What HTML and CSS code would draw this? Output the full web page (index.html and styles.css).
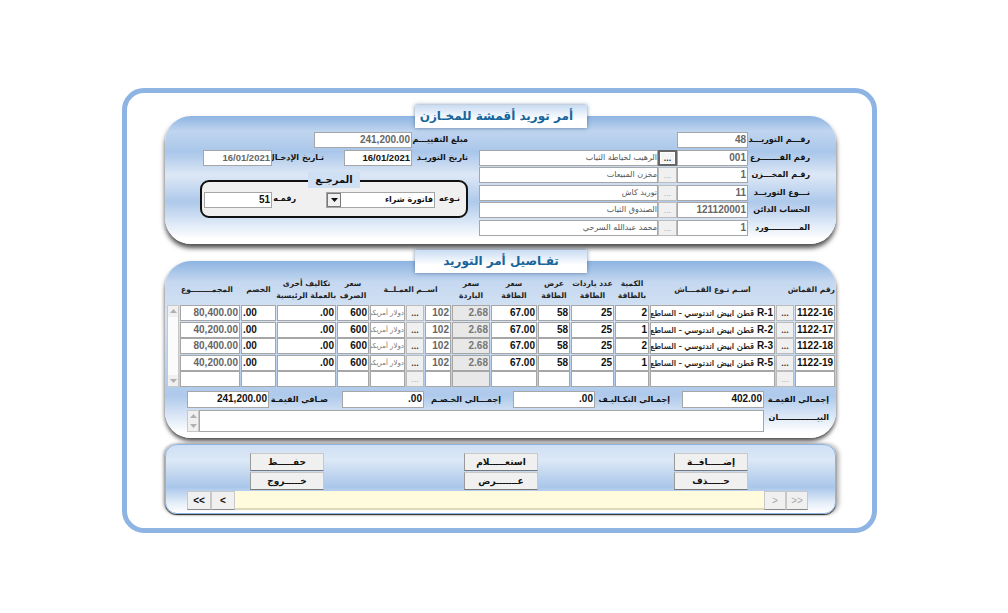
FILE: index.html
```html
<!DOCTYPE html>
<html lang="ar" dir="rtl">
<head>
<meta charset="utf-8">
<title>أمر توريد أقمشة للمخازن</title>
<link rel="stylesheet" href="styles.css">
</head>
<body>
<main class="frame">
  <section class="panel panel-head">
    <h1 class="title title-first">أمر توريد أقمشة للمخـازن</h1>
    <div class="head-right">
      <label class="lbl">رقـــم التوريـــد</label><div class="f num grey">48</div><span></span><span></span>
      <label class="lbl">رقم الفـــــــرع</label><div class="f num grey">001</div><button class="dots focus">...</button><div class="f txt">الرهيب لخياطة الثياب</div>
      <label class="lbl">رقـم المخـــزن</label><div class="f num grey">1</div><button class="dots off">...</button><div class="f txt">مخزن المبيعات</div>
      <label class="lbl">نـــوع التوريــد</label><div class="f num grey">11</div><button class="dots off">...</button><div class="f txt">توريد كاش</div>
      <label class="lbl">الحساب الدائن</label><div class="f num grey">121120001</div><button class="dots off">...</button><div class="f txt">الصندوق الثياب</div>
      <label class="lbl">المـــــــــــورد</label><div class="f num grey">1</div><button class="dots off">...</button><div class="f txt">محمد عبدالله السرحي</div>
    </div>
    <div class="head-left">
      <div class="line">
        <label class="lbl short">مبلغ التقييـــم</label><div class="f num grey w98">241,200.00</div>
      </div>
      <div class="line">
        <label class="lbl short">تاريخ التوريـد</label><div class="f num w68 strong date">16/01/2021</div>
        <label class="lbl mid">تـاريخ الإدخـال</label><div class="f num grey w69 date">16/01/2021</div>
      </div>
      <div class="ref">
        <div class="ref-title">المرجـع</div>
        <label class="lbl ref-type">نـوعه</label>
        <div class="combo"><div class="combo-text">فاتورة شراء</div><div class="combo-arrow"><svg width="7" height="4" viewBox="0 0 7 4"><path d="M0 0h7L3.500 4z" fill="#111"/></svg></div></div>
        <label class="lbl ref-no">رقمـه</label>
        <div class="f num strong w68">51</div>
      </div>
    </div>
  </section>

  <section class="panel panel-detail">
    <h2 class="title">تفـاصيل أمر التوريد</h2>
    <div class="table">
      <div class="th solo">رقم القماش</div><div class="th span2">اسـم نـوع القمـــاش</div><div class="th">الكمية<br>بالطاقة</div><div class="th">عدد ياردات<br>الطاقة</div><div class="th">عرض<br>الطاقة</div><div class="th">سعر<br>الطاقة</div><div class="th">سعر<br>الياردة</div><div class="th span3">اســم العمـلــة</div><div class="th">سعر<br>الصرف</div><div class="th">تكاليف أخرى<br>بالعملة الرئيسية</div><div class="th solo">الخصم</div><div class="th solo th-total">المجمــــــــوع</div><div></div>

      <div class="scroll"><div class="sbtn"><svg width="7" height="4" viewBox="0 0 7 4"><path d="M3.500 0L7 4H0z" fill="#b0b0b0"/></svg></div><div class="sbtn"><svg width="7" height="4" viewBox="0 0 7 4"><path d="M0 0h7L3.500 4z" fill="#b0b0b0"/></svg></div></div>

      <div class="td b num">1122-16</div><button class="dots">...</button><div class="td name"><span class="code">R-1</span> <span class="ar">قطن ابيض اندنوسي - الساطع</span></div><div class="td b num">2</div><div class="td b num">25</div><div class="td b num">58</div><div class="td b num">67.00</div><div class="td b num shade">2.68</div><div class="td num gv">102</div><button class="dots">...</button><div class="td cur">دولار أمريكي</div><div class="td b num">600</div><div class="td b num">.00</div><div class="td b zero">.00</div><div class="td b num gv">80,400.00</div>

      <div class="td b num">1122-17</div><button class="dots">...</button><div class="td name"><span class="code">R-2</span> <span class="ar">قطن ابيض اندنوسي - الساطع</span></div><div class="td b num">1</div><div class="td b num">25</div><div class="td b num">58</div><div class="td b num">67.00</div><div class="td b num shade">2.68</div><div class="td num gv">102</div><button class="dots">...</button><div class="td cur">دولار أمريكي</div><div class="td b num">600</div><div class="td b num">.00</div><div class="td b zero">.00</div><div class="td b num gv">40,200.00</div>

      <div class="td b num">1122-18</div><button class="dots">...</button><div class="td name"><span class="code">R-3</span> <span class="ar">قطن ابيض اندنوسي - الساطع</span></div><div class="td b num">2</div><div class="td b num">25</div><div class="td b num">58</div><div class="td b num">67.00</div><div class="td b num shade">2.68</div><div class="td num gv">102</div><button class="dots">...</button><div class="td cur">دولار أمريكي</div><div class="td b num">600</div><div class="td b num">.00</div><div class="td b zero">.00</div><div class="td b num gv">80,400.00</div>

      <div class="td b num">1122-19</div><button class="dots">...</button><div class="td name"><span class="code">R-5</span> <span class="ar">قطن ابيض اندنوسي - الساطع</span></div><div class="td b num">1</div><div class="td b num">25</div><div class="td b num">58</div><div class="td b num">67.00</div><div class="td b num shade">2.68</div><div class="td num gv">102</div><button class="dots">...</button><div class="td cur">دولار أمريكي</div><div class="td b num">600</div><div class="td b num">.00</div><div class="td b zero">.00</div><div class="td b num gv">40,200.00</div>

      <div class="td"></div><button class="dots off">...</button><div class="td"></div><div class="td"></div><div class="td"></div><div class="td"></div><div class="td"></div><div class="td shade"></div><div class="td"></div><button class="dots off">...</button><div class="td"></div><div class="td"></div><div class="td"></div><div class="td"></div><div class="td"></div>
    </div>
    <div class="totals">
      <label class="lbl t1">إجمـالي القيمـة</label><div class="f num strong w82">402.00</div>
      <label class="lbl t2">إجمـالي التكـاليـف</label><div class="f num strong w82">.00</div>
      <label class="lbl t3">إجمـــالي الخـصـم</label><div class="f num strong w82">.00</div>
      <label class="lbl t4">صـافي القيمـة</label><div class="f num strong w82">241,200.00</div>
    </div>
    <div class="memo">
      <label class="lbl t1">البيــــــــــــــان</label>
      <div class="memo-box"></div>
      <div class="scroll memo-scroll"><div class="sbtn"><svg width="7" height="4" viewBox="0 0 7 4"><path d="M3.500 0L7 4H0z" fill="#b0b0b0"/></svg></div><div class="sbtn"><svg width="7" height="4" viewBox="0 0 7 4"><path d="M0 0h7L3.500 4z" fill="#b0b0b0"/></svg></div></div>
    </div>
  </section>

  <section class="panel panel-actions">
    <div class="actions">
      <div class="btn-col"><button class="act">إضـــــافــة</button><button class="act">حـــــذف</button></div>
      <div class="btn-col"><button class="act">استعـــــلام</button><button class="act">عـــــــرض</button></div>
      <div class="btn-col"><button class="act">حفـــــظ</button><button class="act">خـــــروج</button></div>
    </div>
    <div class="nav" dir="ltr">
      <button class="nav-btn">&lt;&lt;</button><button class="nav-btn">&lt;</button>
      <div class="nav-bar"></div>
      <button class="nav-btn off">&gt;</button><button class="nav-btn off">&gt;&gt;</button>
    </div>
  </section>
</main>
</body>
</html>
```
FILE: styles.css
```css
* { box-sizing: border-box; }
html, body { margin: 0; padding: 0; }
body {
  width: 1008px;
  height: 613px;
  overflow: hidden;
  background: #fff;
  font-family: "Liberation Sans", "DejaVu Sans", sans-serif;
  color: #111;
}
.frame {
  margin: 88px 131px 0 0;
  width: 755px;
  height: 445px;
  border: 5px solid #8db4e2;
  border-radius: 22px;
  padding: 23px 36px 0 38px;
  background: #fff;
}
.panel {
  position: relative;
  width: 671px;
  display: flex;
  flex-wrap: wrap;
  align-content: flex-start;
}
.panel-head {
  height: 128px;
  padding-top: 16px;
  border-radius: 26px;
  background: linear-gradient(#8db4e2 0, #c0d5ef 12%, #a9c6ea 28%, #dde8f6 46%, #aec9eb 67%, #ffffff 96%);
  box-shadow: 0 4px 5px rgba(0,0,0,.7);
  flex-wrap: nowrap;
}
.panel-detail {
  margin-top: 17px;
  height: 177px;
  padding-top: 16px;
  padding-right: 1px;
  border-radius: 26px;
  background: linear-gradient(#8db4e2 0, #c5d8f0 12%, #d5e3f4 30%, #aec9eb 76%, #ffffff 97%);
  box-shadow: 0 3px 4px rgba(0,0,0,.7);
}
.panel-actions {
  margin-top: 6px;
  height: 70px;
  padding-top: 8px;
  border-radius: 12px;
  border: 1px solid #8db4e2;
  background: linear-gradient(#cfdff3 0, #dce8f6 22%, #a9c6ea 62%, #e4edf8 85%, #ffffff 100%);
  box-shadow: 0 1px 1px rgba(0,0,0,.8), -2px 0 3px rgba(0,0,0,.3), 3px 0 4px rgba(0,0,0,.3);
  display: block;
  width: 671px;
}
.title {
  position: absolute;
  top: -11px;
  left: 250px;
  width: 172px;
  height: 23px;
  margin: 0;
  font: bold 12px/23px "DejaVu Sans", sans-serif;
  color: #17659a;
  text-align: center;
  white-space: nowrap;
  background: linear-gradient(#c9dcf3, #ffffff 65%);
  box-shadow: 0 0 4px rgba(60,90,130,.7);
}
.title-first { text-align: right; padding-right: 14px; }
.lbl {
  font: bold 8px/16px "DejaVu Sans", sans-serif;
  color: #111;
  white-space: nowrap;
  padding-right: 6px;
}
.head-right .lbl { padding-right: 26px; }
.f, .td {
  height: 16px;
  border: 1px solid #a6a6a6;
  background: #fff;
  font: 10px/14px "Liberation Sans", "DejaVu Sans", sans-serif;
  padding: 0 1px;
  white-space: nowrap;
  overflow: hidden;
}
.num { direction: ltr; text-align: right; font-weight: bold; }
.date { font-size: 9.500px; }
.grey { color: #666; }
.strong { color: #111; }
.txt {
  color: #555;
  font: 8px/14px "DejaVu Sans", sans-serif;
  padding-right: 0;
}
.w98 { width: 98px; }
.w68 { width: 68px; }
.w69 { width: 69px; }
.w82 { width: 82px; height: 17px; }
.dots {
  height: 16px;
  padding: 0;
  border: 1px solid #bcbcbc;
  background: #f0f0f0;
  font: bold 9px/10px "Liberation Sans", sans-serif;
  color: #333;
}
.dots.off { color: #a8a8a8; font-weight: normal; }
.dots.focus { border: 2px solid #666; background: #f4f4f4; box-shadow: inset 0 0 0 1px #fff; }

.head-right {
  width: 357px;
  flex: none;
  display: grid;
  grid-template-columns: 88px 71px 19px 179px;
  grid-auto-rows: 17.6px;
}
.head-left {
  width: 279px;
  flex: none;
  padding-right: 9px;
}
.line {
  display: flex;
  height: 18px;
}
.line .short { width: 58px; padding-right: 2px; }
.line .mid { width: 72px; padding-right: 20px; }
.ref {
  position: relative;
  margin: 12px 2px 0 0;
  padding: 10px 4px 0 0;
  width: 268px;
  height: 38px;
  border: 2px solid #111;
  border-radius: 9px;
  background: #f0f0f0;
  display: flex;
}
.ref-title {
  position: absolute;
  top: -10px;
  left: 106px;
  width: 52px;
  height: 16px;
  padding: 0;
  background: #cfe0f5;
  font: bold 10px/15px "DejaVu Sans", sans-serif;
  text-align: center;
}
.ref .lbl { line-height: 14px; padding-right: 0; }
.ref .ref-type { width: 27px; padding-right: 2px; }
.combo {
  width: 109px;
  height: 16px;
  display: flex;
  border: 1px solid #a6a6a6;
  background: #fff;
}
.combo-text {
  flex: 1;
  font: bold 8px/14px "DejaVu Sans", sans-serif;
  padding-right: 1px;
}
.combo-arrow {
  width: 14px;
  border: 1px solid #777;
  background: #f0f0f0;
  display: flex;
  align-items: center;
  justify-content: center;
}
.ref .ref-no { padding-right: 30px; width: 54px; }

.table {
  width: 668px;
  display: grid;
  grid-template-columns: 40px 18px 125px 34px 43px 32px 46px 38px 26px 18px 35px 32px 59px 35px 60px 12px;
  grid-template-rows: 27.400px repeat(5, 16px);
  column-gap: 1px;
  row-gap: .6px;
}
.th {
  font: bold 7.600px/12px "DejaVu Sans", sans-serif;
  text-align: center;
  white-space: nowrap;
  align-self: start;
  color: #222;
  padding-top: 1px;
}
.span2 { grid-column: span 2; padding-top: 7px; padding-right: 19px; }
.span3 { grid-column: span 3; padding-top: 7px; }
.solo { padding-top: 7px; }
.th-total { padding-right: 6px; }
.td { font-size: 10px; }
.b { font-weight: bold; }
.td.num { line-height: 14px; }
.gv { color: #666; }
.td.b.gv { color: #666; }
.shade { background: #e8e8e8; }
.td.b.shade { color: #777; }
.name { padding-right: 1px; font-weight: bold; }
.code { font: bold 10px/14px "Liberation Sans", sans-serif; }
.ar {
  font: 8.400px/14px "DejaVu Sans", sans-serif;
  -webkit-text-stroke: .2px #111;
}
.cur { font: 7px/14px "DejaVu Sans", sans-serif; color: #777; padding: 0; direction: rtl; }
.zero { direction: ltr; text-align: left; line-height: 14px; }
.scroll {
  grid-column: 16;
  grid-row: 2 / 7;
  background: #fbfbfb;
  border: 1px solid #c8c8c8;
  display: flex;
  flex-direction: column;
  justify-content: space-between;
}
.sbtn {
  height: 11px;
  background: #f0f0f0;
  display: flex;
  align-items: center;
  justify-content: center;
}
.totals {
  display: flex;
  width: 100%;
  margin-top: 3.500px;
}
.totals .lbl { line-height: 17px; }
.t1 { width: 71px; }
.t2 { width: 87px; padding-right: 12px; }
.t3 { width: 89px; padding-right: 12px; }
.totals .t4 { width: 73px; padding-right: 14px; }
.memo {
  display: flex;
  width: 100%;
  margin-top: 2px;
  height: 22px;
}
.memo-box {
  width: 565px;
  height: 22px;
  background: #fff;
  border: 1px solid #a6a6a6;
}
.memo-scroll { width: 12px; height: 22px; }
.memo-scroll .sbtn { height: 10px; }

.actions {
  display: flex;
  padding-right: 87px;
  height: 37px;
}
.btn-col {
  width: 74px;
  display: flex;
  flex-direction: column;
  gap: 1px;
}
.btn-col:nth-child(2) { margin-right: 136px; }
.btn-col:nth-child(3) { margin-right: 140px; }
.act {
  height: 18px;
  padding: 0;
  border: 1px solid #c8c8c8;
  border-bottom-color: #777;
  border-left-color: #999;
  background: #f0f0f0;
  font: bold 9px/14px "DejaVu Sans", sans-serif;
  color: #111;
}
.nav {
  display: flex;
  margin: 1px 27px 0 21px;
  height: 19px;
}
.nav-btn {
  width: 24px;
  height: 19px;
  padding: 0;
  border: 1px solid #c8c8c8;
  border-bottom-color: #888;
  background: #f0f0f0;
  font: bold 10px/14px "Liberation Sans", sans-serif;
  color: #111;
}
.nav-btn.off { color: #a8a8a8; font-weight: normal; width: 22px; }
.nav-bar {
  flex: 1;
  background: #fffbdc;
  border-bottom: 2px solid #ddd8b8;
}
```
